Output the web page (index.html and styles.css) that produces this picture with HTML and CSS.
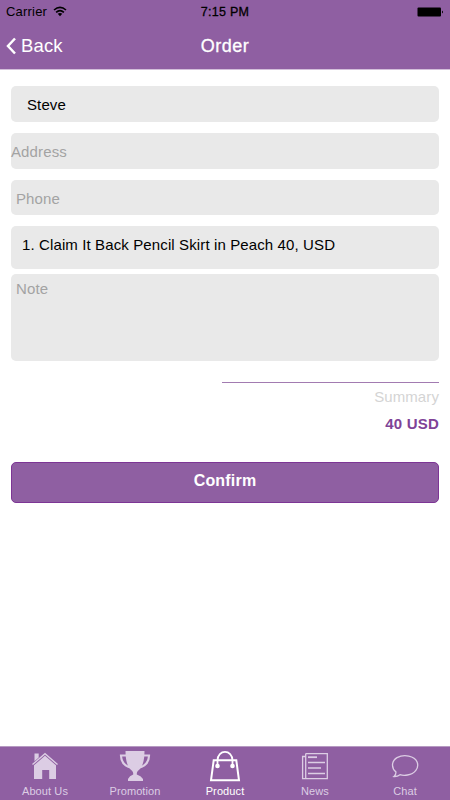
FILE: index.html
```html
<!DOCTYPE html>
<html>
<head>
  <meta charset="utf-8">
  <title>Order</title>
  <link rel="stylesheet" href="styles.css">
</head>
<body>

  <div class="screen">
    <header class="header">
      <div class="status-bar">
        <div class="carrier">
          <span>Carrier</span>
          <svg class="wifi" width="14" height="11" viewBox="0 0 14 11">
            <path d="M1 4 Q7 -1.4 13 4 M3.1 6.4 Q7 2.9 10.9 6.4" fill="none" stroke="#000" stroke-width="1.6"/>
            <path d="M4.7 7.8 Q7 6 9.3 7.8 L7 10.2 Z"/>
          </svg>
        </div>
        <div class="time">7:15 PM</div>
        <svg class="battery" width="27" height="10" viewBox="0 0 27 10">
          <rect x="0.5" y="0.5" width="23.5" height="9" rx="1"/>
          <path d="M25 3.5 Q27 5 25 6.5 Z"/>
        </svg>
      </div>
      <nav class="nav-bar">
        <a class="back">
          <svg width="10" height="18" viewBox="0 0 10 18">
            <path d="M9 1.5 L2 9 L9 16.5" fill="none" stroke="#fff" stroke-width="2.5"/>
          </svg>
          <span>Back</span>
        </a>
        <div class="title">Order</div>
      </nav>
    </header>

    <main class="content">
      <div class="field name">Steve</div>
      <div class="field address placeholder">Address</div>
      <div class="field phone placeholder">Phone</div>
      <div class="field items">1. Claim It Back Pencil Skirt in Peach 40, USD</div>
      <div class="field note placeholder">Note</div>

      <div class="summary">
        <div class="summary-label">Summary</div>
        <div class="summary-total">40 USD</div>
      </div>

      <button class="confirm">Confirm</button>
    </main>

    <footer class="tab-bar">
      <a class="tab">
        <svg width="36" height="32" viewBox="0 0 36 32">
          <path d="M5.5 14.5 L18 3.6 L30.5 14.5" fill="none" stroke="currentColor" stroke-width="1.4"/>
          <path d="M7.5 3.5 H11.7 V7.5 L7.5 11.2 Z M7 15.3 L18 5.8 L29 15.3 V29 H22.2 V20 H15.2 V29 H7 Z" fill="currentColor"/>
        </svg>
        <span>About Us</span>
      </a>
      <a class="tab">
        <svg width="36" height="32" viewBox="0 0 36 32">
          <path d="M8.5 1 H27.5 Q27.5 16.5 20.8 21 Q19.6 22 19.8 24.5 Q24 25.5 26 29 V31 H11 V29 Q12.5 25.5 16.2 24.5 Q16.4 22 15.2 21 Q8.5 16.5 8.5 1 Z" fill="currentColor"/>
          <path d="M10 5.5 H4 Q4.1 15.5 14.5 17.8 M26 5.5 H32 Q31.9 15.5 21.5 17.8" fill="none" stroke="currentColor" stroke-width="2.2"/>
        </svg>
        <span>Promotion</span>
      </a>
      <a class="tab active">
        <svg width="36" height="32" viewBox="0 0 36 32">
          <path d="M6.7 10.3 H29.3 L32 30.3 H4 Z" fill="none" stroke="currentColor" stroke-width="2"/>
          <path d="M10.5 16 V10.5 C10.5 -1 25.5 -1 25.5 10.5 V16" fill="none" stroke="currentColor" stroke-width="1.8"/>
          <circle cx="10.5" cy="16" r="2.3" fill="currentColor"/>
          <circle cx="25.5" cy="16" r="2.3" fill="currentColor"/>
        </svg>
        <span>Product</span>
      </a>
      <a class="tab">
        <svg width="36" height="32" viewBox="0 0 36 32">
          <path d="M8.7 3.6 H30.3 V28.6 H5.6 V6.5 H8.7 M8.7 3.6 V28.6" fill="none" stroke="currentColor" stroke-width="1.3"/>
          <path d="M11 7.2 H20" stroke="currentColor" stroke-width="1.8"/>
          <path d="M11 12.5 H28 M11 18 H24 M11 23.5 H28" stroke="currentColor" stroke-width="1.3"/>
        </svg>
        <span>News</span>
      </a>
      <a class="tab">
        <svg width="36" height="32" viewBox="0 0 36 32">
          <path d="M9 22 C3.5 17.5 5 10.5 10 7.6 C17 3.8 27.5 5.7 30.1 12 C32.4 18 27.7 24 20.5 25 C17.5 25.5 15 25.3 13 24.7 Q10.3 26.7 7 26.5 Q9 25 9 22 Z" fill="none" stroke="currentColor" stroke-width="1.3"/>
        </svg>
        <span>Chat</span>
      </a>
    </footer>
  </div>

</body>
</html>
```

FILE: styles.css
```css
body {
  font-family: "Liberation Sans", Arial, sans-serif;
  background-color: #fff;
  margin: 0;
}

.screen {
  display: flex;
  flex-direction: column;
  height: 800px;
}

.header {
  background-color: #8f5fa2;
  height: 69px;
  border-bottom: 1px solid #d3bfda;
}

.status-bar {
  display: grid;
  grid-template-columns: 1fr auto 1fr;
  align-items: center;
  height: 23px;
  padding: 0 6px;
  font-size: 13px;
}

.carrier {
  display: flex;
  align-items: center;
  gap: 6px;
  letter-spacing: 0.2px;
}

.time {
  font-size: 12.5px;
  letter-spacing: 0.3px;
  -webkit-text-stroke: 0.3px #000;
}

.battery {
  justify-self: end;
}

.nav-bar {
  display: grid;
  grid-template-columns: 1fr auto 1fr;
  align-items: center;
  height: 46px;
  padding: 0 6px;
  color: #fff;
  font-size: 18px;
}

.back {
  display: flex;
  align-items: center;
  gap: 5px;
  font-size: 18.5px;
  letter-spacing: 0.15px;
}

.title {
  letter-spacing: 0.5px;
  -webkit-text-stroke: 0.3px #fff;
}

.content {
  flex: 1;
  padding: 16px 11px 0;
}

.field {
  box-sizing: border-box;
  height: 36px;
  margin-bottom: 11px;
  border-radius: 5px;
  background-color: #e9e9e9;
  color: #000;
  font-size: 15px;
  line-height: 37px;
  letter-spacing: 0.12px;
}

.placeholder {
  color: #a3a3a3;
}

.name {
  padding-left: 16px;
}

.phone {
  padding-left: 5px;
}

.items {
  height: 43px;
  margin-bottom: 5px;
  padding-left: 11px;
}

.note {
  height: 87px;
  margin-bottom: 0;
  padding-left: 5px;
  line-height: 29px;
}

.address,
.phone {
  height: 35.5px;
}

.summary {
  width: 217px;
  margin: 21px 0 0 auto;
  border-top: 1.5px solid #a27bb1;
  text-align: right;
  font-size: 15px;
  line-height: 27px;
  letter-spacing: 0.1px;
}

.summary-label {
  color: #d4d4d4;
}

.summary-total {
  color: #7f4397;
  font-weight: bold;
  letter-spacing: 0.2px;
}

.confirm {
  display: block;
  width: 100%;
  height: 41px;
  margin-top: 25px;
  padding: 0 0 4px;
  border: 1px solid #7d3595;
  border-radius: 5px;
  background-color: #8f5fa2;
  color: #fff;
  font-family: inherit;
  font-size: 16px;
  font-weight: bold;
  letter-spacing: 0.2px;
}

.tab-bar {
  display: flex;
  height: 53px;
  border-top: 1px solid #b69ac2;
  background-color: #8f5fa2;
}

.tab {
  flex: 1;
  display: flex;
  flex-direction: column;
  align-items: center;
  padding-top: 3px;
  color: #dccde4;
  font-size: 11px;
  line-height: 18px;
  letter-spacing: 0.1px;
}

.active {
  color: #fff;
}
```
